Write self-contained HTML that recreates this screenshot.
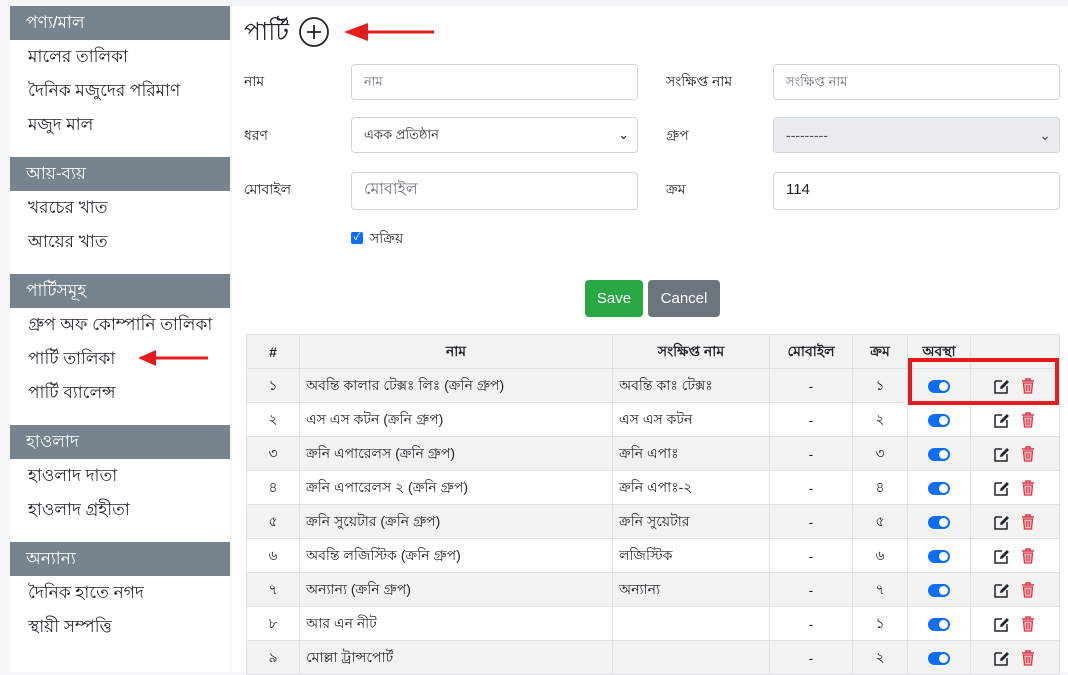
<!DOCTYPE html><html><head><meta charset="utf-8"><style>
body{margin:0;width:1068px;height:672px;overflow:hidden;background:#f5f6f8;font-family:"Liberation Sans","Noto Sans CJK SC",sans-serif;color:#212529;position:relative}
.sb{position:absolute;left:10px;top:6px;width:220px;height:666px;background:#fff}
.h{background:#77838f;color:#fff;font-size:17px;height:34px;line-height:34px;padding-left:16px}
.it{font-size:17px;height:34px;line-height:34px;padding-left:18px}
.g{height:15px}
.main{position:absolute;left:232px;top:6px;width:836px;height:666px;background:#fff}
.lb{position:absolute;font-size:14px}
.in{position:absolute;border:1px solid #ced4da;border-radius:4px;height:36px;box-sizing:border-box;background:#fff;font-size:14px;line-height:34px;padding-left:12px;color:#6c757d}
table{position:absolute;left:14px;top:328px;border-collapse:collapse;font-size:14px;width:814px}
td,th{border:1px solid #dee2e6;height:33px;padding:0 6px}
th{background:#f2f2f2;font-weight:bold;text-align:center}
tr:nth-child(even) td{background:#f2f2f2}
.c{text-align:center}
.tg{display:inline-block;width:22px;height:13px;border-radius:7px;background:#0d6efd;position:relative;vertical-align:middle}
.tg:after{content:"";position:absolute;right:2px;top:2px;width:9px;height:9px;border-radius:50%;background:#fff}
.btn{position:absolute;top:274px;height:37px;border-radius:4px;color:#fff;font-size:15px;line-height:37px;text-align:center}
.ic{vertical-align:middle}
</style></head><body>
<svg width="0" height="0" style="position:absolute"><defs>
<g id="ed"><path d="M2 4H9M2 4V16H14V9" fill="none" stroke="#212529" stroke-width="1.5"/><path d="M7 12L7.5 9.5L14 3L16 5L9.5 11.5Z" fill="#212529"/></g>
<g id="tr"><path d="M3 4H15M7 4V2H11V4" fill="none" stroke="#dc3545" stroke-width="1.5"/><path d="M4.5 6H13.5L12.5 16H5.5Z" fill="#f5b5bb" stroke="#dc3545" stroke-width="1.3"/><path d="M7.5 8V14M9 8V14M10.5 8V14" stroke="#dc3545" stroke-width="0.8"/></g>
</defs></svg>
<div class="sb">
<div class="h">পণ্য/মাল</div><div class="it">মালের তালিকা</div><div class="it">দৈনিক মজুদের পরিমাণ</div><div class="it">মজুদ মাল</div><div class="g"></div>
<div class="h">আয়-ব্যয়</div><div class="it">খরচের খাত</div><div class="it">আয়ের খাত</div><div class="g"></div>
<div class="h">পার্টিসমূহ</div><div class="it">গ্রুপ অফ কোম্পানি তালিকা</div><div class="it">পার্টি তালিকা</div><div class="it">পার্টি ব্যালেন্স</div><div class="g"></div>
<div class="h">হাওলাদ</div><div class="it">হাওলাদ দাতা</div><div class="it">হাওলাদ গ্রহীতা</div><div class="g"></div>
<div class="h">অন্যান্য</div><div class="it">দৈনিক হাতে নগদ</div><div class="it">স্থায়ী সম্পত্তি</div>
</div>
<svg style="position:absolute;left:130px;top:346px" width="80" height="24"><path d="M78 12H22" stroke="#e31b1b" stroke-width="3"/><path d="M8 12L26 4V20Z" fill="#e31b1b"/></svg>
<div class="main">
<div style="position:absolute;left:12px;top:6px;font-size:25px">পার্টি</div>
<svg style="position:absolute;left:66px;top:10px" width="32" height="32"><circle cx="16" cy="16" r="14" fill="none" stroke="#212529" stroke-width="1.8"/><path d="M16 9V23M9 16H23" stroke="#212529" stroke-width="1.8"/></svg>
<svg style="position:absolute;left:108px;top:13px" width="96" height="26"><path d="M94 13H26" stroke="#e31b1b" stroke-width="3"/><path d="M4 13L28 4V22Z" fill="#e31b1b"/></svg>
<div class="lb" style="left:12px;top:64px">নাম</div><div class="in" style="left:119px;top:58px;width:287px;font-size:13px">নাম</div>
<div class="lb" style="left:434px;top:64px">সংক্ষিপ্ত নাম</div><div class="in" style="left:541px;top:58px;width:287px;font-size:13px">সংক্ষিপ্ত নাম</div>
<div class="lb" style="left:12px;top:118px">ধরণ</div><div class="in" style="left:119px;top:111px;width:287px;color:#212529;font-size:13px">একক প্রতিষ্ঠান<span style="position:absolute;right:8px">⌄</span></div>
<div class="lb" style="left:434px;top:118px">গ্রুপ</div><div class="in" style="left:541px;top:111px;width:287px;background:#e9ecef;color:#495057">---------<span style="position:absolute;right:8px">⌄</span></div>
<div class="lb" style="left:12px;top:172px">মোবাইল</div><div class="in" style="left:119px;top:166px;width:287px;height:38px;font-size:16px">মোবাইল</div>
<div class="lb" style="left:434px;top:172px">ক্রম</div><div class="in" style="left:541px;top:166px;width:287px;height:38px;font-size:15px;color:#212529">114</div>
<div style="position:absolute;left:119px;top:226px;width:12px;height:12px;background:#0d6efd;border-radius:2px;color:#fff;font-size:10px;line-height:12px;text-align:center">✓</div>
<div class="lb" style="left:138px;top:221px">সক্রিয়</div>
<div class="btn" style="left:353px;width:58px;background:#28a745">Save</div>
<div class="btn" style="left:416px;width:72px;background:#6c757d">Cancel</div>
<table>
<tr><th style="width:40px">#</th><th style="width:300px">নাম</th><th style="width:144px">সংক্ষিপ্ত নাম</th><th style="width:70px">মোবাইল</th><th style="width:42px">ক্রম</th><th style="width:50px">অবস্থা</th><th></th></tr>
<tr><td class="c">১</td><td>অবন্তি কালার টেক্সঃ লিঃ (ক্রনি গ্রুপ)</td><td>অবন্তি কাঃ টেক্সঃ</td><td class="c">-</td><td class="c">১</td><td class="c"><span class="tg"></span></td><td class="c"><svg class="ic" width="18" height="18"><use href="#ed"/></svg>&nbsp;&nbsp;<svg class="ic" width="18" height="18"><use href="#tr"/></svg></td></tr>
<tr><td class="c">২</td><td>এস এস কটন (ক্রনি গ্রুপ)</td><td>এস এস কটন</td><td class="c">-</td><td class="c">২</td><td class="c"><span class="tg"></span></td><td class="c"><svg class="ic" width="18" height="18"><use href="#ed"/></svg>&nbsp;&nbsp;<svg class="ic" width="18" height="18"><use href="#tr"/></svg></td></tr>
<tr><td class="c">৩</td><td>ক্রনি এপারেলস (ক্রনি গ্রুপ)</td><td>ক্রনি এপাঃ</td><td class="c">-</td><td class="c">৩</td><td class="c"><span class="tg"></span></td><td class="c"><svg class="ic" width="18" height="18"><use href="#ed"/></svg>&nbsp;&nbsp;<svg class="ic" width="18" height="18"><use href="#tr"/></svg></td></tr>
<tr><td class="c">৪</td><td>ক্রনি এপারেলস ২ (ক্রনি গ্রুপ)</td><td>ক্রনি এপাঃ-২</td><td class="c">-</td><td class="c">৪</td><td class="c"><span class="tg"></span></td><td class="c"><svg class="ic" width="18" height="18"><use href="#ed"/></svg>&nbsp;&nbsp;<svg class="ic" width="18" height="18"><use href="#tr"/></svg></td></tr>
<tr><td class="c">৫</td><td>ক্রনি সুয়েটার (ক্রনি গ্রুপ)</td><td>ক্রনি সুয়েটার</td><td class="c">-</td><td class="c">৫</td><td class="c"><span class="tg"></span></td><td class="c"><svg class="ic" width="18" height="18"><use href="#ed"/></svg>&nbsp;&nbsp;<svg class="ic" width="18" height="18"><use href="#tr"/></svg></td></tr>
<tr><td class="c">৬</td><td>অবন্তি লজিস্টিক (ক্রনি গ্রুপ)</td><td>লজিস্টিক</td><td class="c">-</td><td class="c">৬</td><td class="c"><span class="tg"></span></td><td class="c"><svg class="ic" width="18" height="18"><use href="#ed"/></svg>&nbsp;&nbsp;<svg class="ic" width="18" height="18"><use href="#tr"/></svg></td></tr>
<tr><td class="c">৭</td><td>অন্যান্য (ক্রনি গ্রুপ)</td><td>অন্যান্য</td><td class="c">-</td><td class="c">৭</td><td class="c"><span class="tg"></span></td><td class="c"><svg class="ic" width="18" height="18"><use href="#ed"/></svg>&nbsp;&nbsp;<svg class="ic" width="18" height="18"><use href="#tr"/></svg></td></tr>
<tr><td class="c">৮</td><td>আর এন নীট</td><td></td><td class="c">-</td><td class="c">১</td><td class="c"><span class="tg"></span></td><td class="c"><svg class="ic" width="18" height="18"><use href="#ed"/></svg>&nbsp;&nbsp;<svg class="ic" width="18" height="18"><use href="#tr"/></svg></td></tr>
<tr><td class="c">৯</td><td>মোল্লা ট্রান্সপোর্ট</td><td></td><td class="c">-</td><td class="c">২</td><td class="c"><span class="tg"></span></td><td class="c"><svg class="ic" width="18" height="18"><use href="#ed"/></svg>&nbsp;&nbsp;<svg class="ic" width="18" height="18"><use href="#tr"/></svg></td></tr>
</table>
<div style="position:absolute;left:676px;top:352px;width:151px;height:47px;border:4px solid #e31b1b;box-sizing:border-box"></div>
</div>
</body></html>
